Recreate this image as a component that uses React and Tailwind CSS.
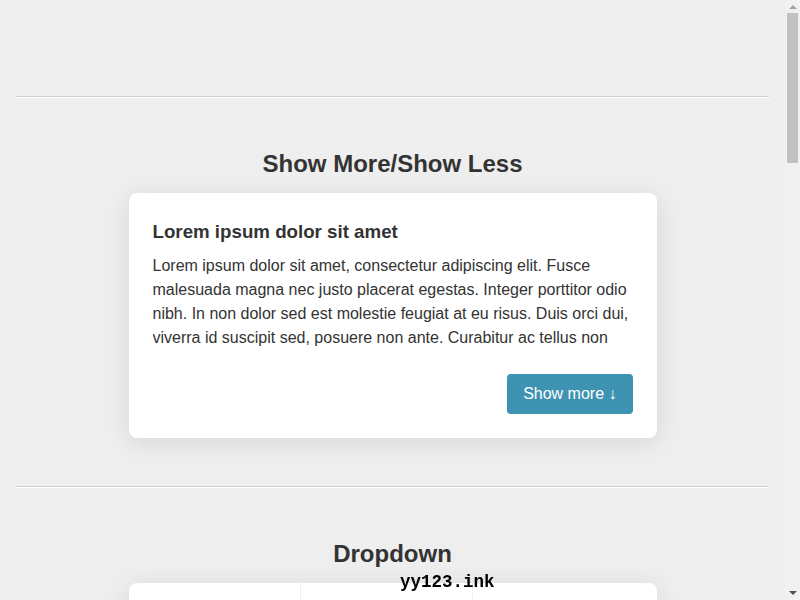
import { useState } from "react";

const LOREM =
  "Lorem ipsum dolor sit amet, consectetur adipiscing elit. Fusce malesuada magna nec justo placerat egestas. Integer porttitor odio nibh. In non dolor sed est molestie feugiat at eu risus. Duis orci dui, viverra id suscipit sed, posuere non ante. Curabitur ac tellus non nisl pharetra pharetra. Vestibulum ante ipsum primis in faucibus orci luctus et ultrices posuere cubilia curae; Sed tempus nibh sit amet sapien dictum, at tincidunt lorem pharetra.";

function Divider() {
  return <hr className="mx-4 border-0 border-t border-b border-t-[#cccccc] border-b-white" />;
}

function ShowMore() {
  const [open, setOpen] = useState(false);

  return (
    <div className="mx-auto w-[528px] rounded-lg bg-white px-6 pt-[27px] pb-6 shadow-[0_4px_24px_rgba(0,0,0,0.1)]">
      <h3 className="text-[18.72px] font-bold leading-[23px] mb-[11px]">Lorem ipsum dolor sit amet</h3>
      <p className={open ? "leading-6" : "leading-6 max-h-24 overflow-hidden"}>{LOREM}</p>
      <div className="mt-6 flex justify-end">
        <button
          onClick={() => setOpen(!open)}
          className="rounded-sm bg-[#3e93b3] px-4 py-2 leading-6 text-white"
        >
          {open ? "Show less ↑" : "Show more ↓"}
        </button>
      </div>
    </div>
  );
}

function Dropdown() {
  const items = ["Home", "Products", "Services"];

  return (
    <div className="mx-auto flex w-[528px] rounded-lg bg-white shadow-[0_4px_24px_rgba(0,0,0,0.1)]">
      {items.map((item, i) => (
        <div
          key={item}
          className={
            i < 2
              ? "w-[172px] border-r border-[#eeeeee] px-6 py-4 leading-6"
              : "flex-1 px-6 py-4 leading-6"
          }
        >
          {item} ▾
        </div>
      ))}
    </div>
  );
}

function Section({ title, children }) {
  return (
    <section className="pt-[51px] pb-12">
      <h2 className="mb-[14px] text-center text-[24px] font-bold leading-[30px]">{title}</h2>
      {children}
    </section>
  );
}

function Scrollbar() {
  return (
    <div className="fixed top-0 right-0 flex h-full w-[15px] flex-col items-center bg-[#f1f1f1]">
      <div className="flex h-[13px] w-full items-center justify-center">
        <div className="h-0 w-0 border-x-[4px] border-b-[4px] border-x-transparent border-b-[#a3a3a3]" />
      </div>
      <div className="h-[150px] w-[11px] bg-[#c1c1c1]" />
      <div className="flex-1" />
      <div className="flex h-[15px] w-full items-center justify-center">
        <div className="h-0 w-0 border-x-[4px] border-t-[4px] border-x-transparent border-t-[#505050]" />
      </div>
    </div>
  );
}

export default function App() {
  return (
    <div className="min-h-[2300px] w-[785px] bg-[#eeeeee] font-['Liberation_Sans',Arial,sans-serif] text-[16px] text-[#333333]">
      <div className="h-24" />
      <Divider />
      <Section title="Show More/Show Less">
        <ShowMore />
      </Section>
      <Divider />
      <Section title="Dropdown">
        <Dropdown />
      </Section>
      <Divider />
      <Section title="Tabs">
        <div className="mx-auto h-48 w-[528px] rounded-lg bg-white shadow-[0_4px_24px_rgba(0,0,0,0.1)]" />
      </Section>
      <Divider />
      <Section title="Accordion">
        <div className="mx-auto h-64 w-[528px] rounded-lg bg-white shadow-[0_4px_24px_rgba(0,0,0,0.1)]" />
      </Section>

      <div className="fixed bottom-[8px] left-[400px] font-['Liberation_Mono',monospace] text-[17.5px] font-black leading-5 text-black">
        yy123.ink
      </div>
      <Scrollbar />
    </div>
  );
}
